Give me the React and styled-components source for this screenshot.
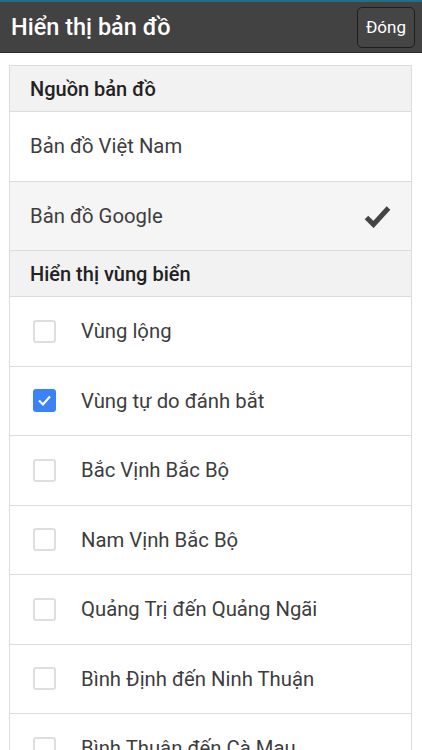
import React from 'react';
import styled, { createGlobalStyle } from 'styled-components';

const GlobalStyle = createGlobalStyle`
  * {
    box-sizing: border-box;
  }
  body {
    margin: 0;
    background-color: white;
    font-family: Roboto, 'Noto Sans', sans-serif;
  }
`;

const Page = styled.div`
  width: 100%;
  min-height: 750px;
  border-top: 2px solid #1f6f86;
`;

const TopBar = styled.div`
  height: 51px;
  padding: 0 7px 0 11px;
  display: flex;
  align-items: center;
  justify-content: space-between;
  background-color: #424242;
  border-bottom: 1px solid #2e2e2e;
`;

const Title = styled.h1`
  margin: 0;
  font-size: 23.5px;
  font-weight: 500;
  color: white;
`;

const CloseButton = styled.button.attrs(() => ({
  type: 'button'
}))`
  width: 58px;
  height: 41px;
  padding: 0;
  border: 1px solid #1e1e1e;
  border-radius: 5px;
  background-color: #454545;
  color: white;
  font-family: Roboto, sans-serif;
  font-size: 17px;
  cursor: pointer;
`;

const Card = styled.div`
  margin: 12px 10px 0 9px;
  border: 1px solid #dcdcdc;
  border-bottom: none;
`;

const SectionHeader = styled.div`
  height: 46px;
  padding: 0 20px;
  display: flex;
  align-items: center;
  background-color: #f2f2f2;
  border-bottom: 1px solid #dcdcdc;
  font-size: 20px;
  font-weight: 500;
  color: #222;
`;

const Row = styled.div`
  height: 69.5px;
  padding: 0 20px 0 ${(props) => (props.$checkbox ? '23px' : '20px')};
  display: flex;
  align-items: center;
  gap: 25px;
  background-color: ${(props) => (props.$active ? '#f5f5f5' : 'white')};
  border-bottom: 1px solid #dcdcdc;
  font-size: 20.3px;
  color: #3d3d3d;
`;

const Label = styled.span`
  flex: 1;
  white-space: nowrap;
`;

const Box = styled.span`
  width: 23px;
  height: 23px;
  display: flex;
  align-items: center;
  justify-content: center;
  border-radius: 3px;
  border: ${(props) => (props.$checked ? 'none' : '2px solid #dedede')};
  background-color: ${(props) => (props.$checked ? '#3b82f6' : 'white')};
`;

const CheckMark = () => (
  <svg width="27" height="24" viewBox="0 0 27 24">
    <path d="M2.5 13.5 L9.5 20.5 L24.5 4" fill="none" stroke="#444" strokeWidth="5" />
  </svg>
);

const SmallTick = () => (
  <svg width="15" height="13" viewBox="0 0 15 13">
    <path d="M2 6.5 L6 10.5 L13 2.5" fill="none" stroke="white" strokeWidth="2.2" />
  </svg>
);

const sources = [
  { name: 'Bản đồ Việt Nam', active: false },
  { name: 'Bản đồ Google', active: true }
];

const zones = [
  { name: 'Vùng lộng', checked: false },
  { name: 'Vùng tự do đánh bắt', checked: true },
  { name: 'Bắc Vịnh Bắc Bộ', checked: false },
  { name: 'Nam Vịnh Bắc Bộ', checked: false },
  { name: 'Quảng Trị đến Quảng Ngãi', checked: false },
  { name: 'Bình Định đến Ninh Thuận', checked: false },
  { name: 'Bình Thuận đến Cà Mau', checked: false }
];

export default function App() {
  return (
    <Page>
      <GlobalStyle />
      <TopBar>
        <Title>Hiển thị bản đồ</Title>
        <CloseButton>Đóng</CloseButton>
      </TopBar>
      <Card>
        <SectionHeader>Nguồn bản đồ</SectionHeader>
        {sources.map((item) => (
          <Row key={item.name} $active={item.active}>
            <Label>{item.name}</Label>
            {item.active && <CheckMark />}
          </Row>
        ))}
        <SectionHeader>Hiển thị vùng biển</SectionHeader>
        {zones.map((zone) => (
          <Row key={zone.name} $checkbox>
            <Box $checked={zone.checked}>{zone.checked && <SmallTick />}</Box>
            <Label>{zone.name}</Label>
          </Row>
        ))}
      </Card>
    </Page>
  );
}
